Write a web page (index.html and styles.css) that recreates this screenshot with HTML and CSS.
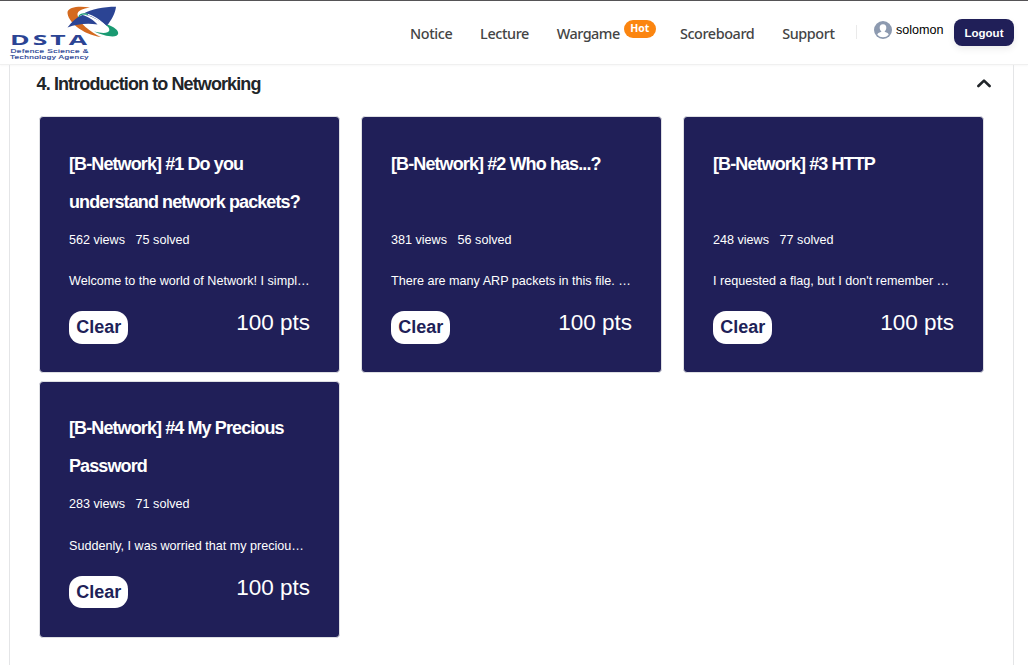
FILE: index.html
```html
<!DOCTYPE html>
<html lang="en">
<head>
<meta charset="utf-8">
<title>Wargame</title>
<link rel="stylesheet" href="styles.css">
</head>
<body>
<header class="header">
  <svg class="logo" width="112" height="60" viewBox="8 3 112 60" role="img" aria-label="DSTA">
    <path d="M90 7.500C80 5.800 68.500 6.500 67.500 12C67 21 82 34.500 101 37C90 32 78.500 22.500 77.500 15C77 10.500 83 8.500 90 7.500Z" fill="#d46a1f"/>
    <path d="M67.500 27.500C72 21.500 77 17.500 82 14.800C88 16.500 94 20.500 97.500 24.500C87 23 77 24 67.500 27.500Z" fill="#2b4494"/>
    <path d="M82.500 14.200C92 9 103 6.800 116 6.800C115.500 13 111.500 20 106.800 26C99 20 91 15.500 82.500 14.200Z" fill="#2b4494"/>
    <path d="M79.500 16C81 13.300 87 13.500 92 16C99 19.500 103 23 106.500 27" fill="none" stroke="#fff" stroke-width="1.300"/>
    <path d="M79 17C79.500 13.800 84 13.300 88 14.500" fill="none" stroke="#1a9a72" stroke-width="1.300"/>
    <path d="M107.500 24.500C114 27 118.500 30 118.200 33.500C117.500 38.500 105 36.500 94 31.500C102 33.500 108.500 33.500 109.300 30.500C109.500 28.500 108.500 27 106.500 25.500Z" fill="#1a9a72"/>
    <text class="logo-name" x="10" y="45.2" textLength="80" lengthAdjust="spacingAndGlyphs">DSTA</text>
    <text class="logo-line" x="10.4" y="53.2" textLength="78.4" lengthAdjust="spacingAndGlyphs">Defence Science &amp;</text>
    <text class="logo-line" x="10" y="59.4" textLength="78.8" lengthAdjust="spacingAndGlyphs">Technology Agency</text>
  </svg>
  <nav class="nav">
    <a>Notice</a><a>Lecture</a><a>Wargame</a><span class="hot">Hot</span><a>Scoreboard</a><a>Support</a>
  </nav>
  <div class="divider"></div>
  <div class="user">
    <svg width="18" height="18" viewBox="0 0 18 18"><circle cx="9" cy="9" r="9" fill="#8d9ab0"/><path d="M9 3.2C11.2 3.2 12.5 4.8 12.3 7C12.2 8.5 11.5 9.8 10.7 10.3V10.8L13.6 12Q14.400 12.600 14.700 13.800Q12.400 16.300 9 16.300T3.300 13.800Q3.600 12.600 4.400 12L7.300 10.800V10.300C6.500 9.800 5.800 8.500 5.700 7C5.500 4.800 6.800 3.200 9 3.200Z" fill="#fff"/></svg>
    <span>solomon</span>
  </div>
  <button class="logout">Logout</button>
</header>
<main class="panel">
  <div class="section-head">
    <h2>4. Introduction to Networking</h2>
    <svg width="14" height="9" viewBox="0 0 14 9"><path d="M1.4 7L7 1.6L12.6 7" fill="none" stroke="#212529" stroke-width="2.6" stroke-linecap="round" stroke-linejoin="round"/></svg>
  </div>
  <div class="cards">
    <article class="card">
      <h3>[B-Network] #1 Do you understand network packets?</h3>
      <p class="stats"><span>562 views</span><span>75 solved</span></p>
      <p class="desc">Welcome to the world of Network! I simpl…</p>
      <div class="foot"><span class="clear">Clear</span><span class="pts">100 pts</span></div>
    </article>
    <article class="card">
      <h3>[B-Network] #2 Who has...?</h3>
      <p class="stats"><span>381 views</span><span>56 solved</span></p>
      <p class="desc">There are many ARP packets in this file. …</p>
      <div class="foot"><span class="clear">Clear</span><span class="pts">100 pts</span></div>
    </article>
    <article class="card">
      <h3>[B-Network] #3 HTTP</h3>
      <p class="stats"><span>248 views</span><span>77 solved</span></p>
      <p class="desc">I requested a flag, but I don't remember …</p>
      <div class="foot"><span class="clear">Clear</span><span class="pts">100 pts</span></div>
    </article>
    <article class="card">
      <h3>[B-Network] #4 My Precious Password</h3>
      <p class="stats"><span>283 views</span><span>71 solved</span></p>
      <p class="desc">Suddenly, I was worried that my preciou…</p>
      <div class="foot"><span class="clear">Clear</span><span class="pts">100 pts</span></div>
    </article>
  </div>
</main>
</body>
</html>
```
FILE: styles.css
```css
* { box-sizing: border-box; }
body { margin: 0; height: 665px; overflow: hidden; display: flex; flex-direction: column; background: #fff; font-family: "Liberation Sans", Arial, sans-serif; color: #212529; }
h2, h3, p { margin: 0; }
.header { height: 65px; flex: none; display: flex; align-items: flex-start; border-top: 1px solid #555356; border-bottom: 1px solid #f0f0f0; padding: 0 14px 0 8px; box-shadow: 0 1px 2px rgba(0,0,0,.03); }
.logo { margin-top: 2px; flex: none; }
.logo-name { font: 700 14.2px "Open Sans", sans-serif; letter-spacing: 1.6px; fill: #2b4494; }
.logo-line { font: 400 5.3px "Liberation Sans", Arial, sans-serif; letter-spacing: .3px; fill: #2b4494; stroke: #2b4494; stroke-width: .15px; }
.nav { display: flex; margin-left: 290px; width: 425px; padding-top: 22px; font: 500 14.4px/22px "Noto Sans", sans-serif; letter-spacing: -.4px; color: #444; flex: none; white-space: nowrap; }
.nav a { margin-right: 27.8px; flex: none; }
.nav a:nth-child(3) { margin-right: 4.2px; letter-spacing: -.5px; }
.hot { flex: none; width: 32px; height: 18px; margin: -3px 24px 0 0; border-radius: 9px; background: #fb8510; color: #fff; font: 700 10.5px/17px "Open Sans", sans-serif; letter-spacing: 0; text-align: center; }
.divider { width: 1px; height: 14px; margin: 24px 0 0 21px; background: #eaeaea; }
.user { display: flex; gap: 4px; margin: 20px 0 0 17px; font-size: 12.6px; line-height: 18px; color: #000; width: 70px; flex: none; }
.user svg { flex: none; }
.logout { margin: 18px 0 0 auto; width: 60px; height: 27px; border: 0; padding: 0; border-radius: 8px; background: #201f58; color: #fff; font: 700 11.5px "Liberation Sans", Arial, sans-serif; box-shadow: 0 3px 7px rgba(0,0,0,.08); }
.panel { flex: 1; margin: 0 14px 0 9px; border: solid #e4e5e7; border-width: 0 1px; }
.section-head { display: flex; justify-content: space-between; align-items: center; height: 38px; padding: 0 22px 0 26.6px; }
.section-head svg { margin-top: -1px; }
.section-head h2 { font-size: 18px; line-height: 22px; letter-spacing: -.9px; }
.cards { display: grid; grid-template-columns: repeat(3, 301px); column-gap: 21px; row-gap: 7.5px; padding: 13px 0 0 29px; }
.card { height: 257px; border: 1px solid #dedfe3; border-radius: 4px; background: #201f58; color: #fff; padding: 27.8px 29px 0; }
.card h3 { height: 76px; font-size: 18px; line-height: 38px; letter-spacing: -.9px; }
.stats { display: flex; gap: 10.6px; font-size: 12.6px; line-height: 38px; white-space: nowrap; }
.desc { font-size: 12.6px; line-height: 20px; margin-top: 12.4px; white-space: nowrap; }
.foot { display: flex; justify-content: space-between; margin-top: 20px; }
.clear { width: 59.4px; height: 32.6px; border-radius: 13px; background: #fff; color: #201f58; font-size: 18px; font-weight: 700; line-height: 33.5px; text-align: center; }
.pts { font-size: 22.5px; line-height: 24px; }
```
